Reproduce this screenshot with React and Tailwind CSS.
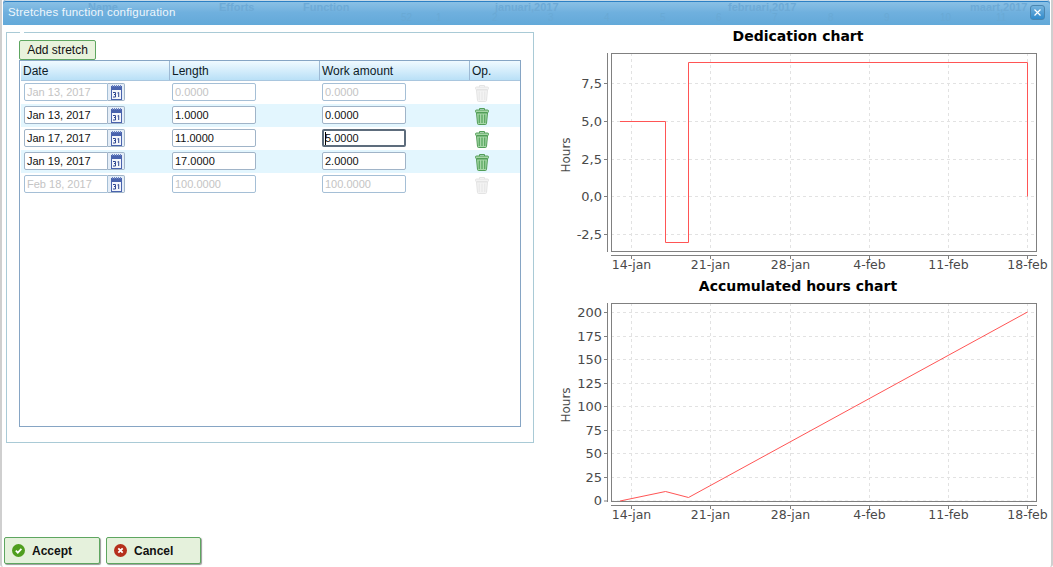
const axisText = "#4a4a4a";

function CalIcon() {
  return (
    <svg width="11" height="15" viewBox="0 0 11 15">
      <rect x="0.5" y="1.5" width="10" height="13" fill="#f4f6fb" stroke="#4a63ad" />
      <rect x="1" y="2" width="9" height="3" fill="#4a63ad" />
      <path d="M1.5 0v2M3.5 0v2M5.5 0v2M7.5 0v2M9.5 0v2" stroke="#6f86c4" />
      <path d="M2 7.5h2.5v2h-1.5h1.5v2.5h-2.5M6.5 8l1.2-.5v4.5" fill="none" stroke="#2f4690" strokeWidth="1" />
    </svg>
  );
}

function TrashIcon({ off }) {
  const s = off ? "#e4e4e4" : "#529e58";
  const f = off ? "#f3f3f3" : "#a6d6a6";
  const d = off ? "#e9e9e9" : "#5aa862";
  return (
    <svg width="14" height="17" viewBox="0 0 14 17">
      <path d="M4.5 2V0.5h5V2" fill="none" stroke={s} />
      <rect x="0.5" y="2" width="13" height="2.5" rx="1" fill={f} stroke={s} />
      <path d="M1.5 5l1 10.5c0 .6.4 1 1 1h7c.6 0 1-.4 1-1l1-10.5z" fill={f} stroke={s} />
      <path d="M4.3 6.5v8.5M7 6.5v8.5M9.7 6.5v8.5" stroke={d} strokeWidth="1.3" />
    </svg>
  );
}

function Field({ value, off, focus, right }) {
  return (
    <div
      className={`w-[84px] h-[18px] bg-white flex items-center text-[11px] leading-none overflow-hidden relative ${
        right ? "rounded-l-[2px]" : "rounded-[2px]"
      } ${focus ? "border-2 border-[#5d6c7c] pl-[1px]" : off ? "border border-[#a5bfd6] pl-[2px]" : "border border-[#a0b4c8] pl-[2px]"} ${
        off ? "text-[#c4c4c4]" : "text-[#111]"
      }`}
    >
      {focus && <span className="w-px h-[13px] bg-black absolute left-[1px] top-[1px]" />}
      {value}
    </div>
  );
}

function Row({ date, len, work, off, alt, focus }) {
  return (
    <div className={`flex h-[23px] items-start pt-[2px] ${alt ? "bg-[#e3f6fe]" : "bg-white"}`}>
      <div className="w-[149px] pl-[3px] flex">
        <Field value={date} off={off} right />
        <div className="w-[17px] h-[18px] bg-[#e4edf7] border border-l-0 border-[#a0b4c8] rounded-r-[2px] flex items-center justify-center">
          <CalIcon />
        </div>
      </div>
      <div className="w-[150px] pl-[2px]">
        <Field value={len} off={off} />
      </div>
      <div className="w-[150px] pl-[2px]">
        <Field value={work} off={off} focus={focus} />
      </div>
      <div className="w-[50px] pl-[5px] pt-[2px] flex">
        <TrashIcon off={off} />
      </div>
    </div>
  );
}

function Head({ label, w }) {
  return (
    <div className={`${w} h-full pl-[2px] flex items-center border-r border-[#9db9d4] last:border-r-0 text-[12px] text-[#0d1b26]`}>
      {label}
    </div>
  );
}

const xTicks = [
  [631.5, "14-jan"],
  [710.5, "21-jan"],
  [790.5, "28-jan"],
  [869.5, "4-feb"],
  [948.5, "11-feb"],
  [1027.5, "18-feb"],
];

function Chart({ title, top, bottom, yTicks, line, ox, oy, h }) {
  const labelY = bottom + 18;
  return (
    <svg width="503" height={h} viewBox={`${ox} ${oy} 503 ${h}`} className="block" style={{ fontFamily: "'DejaVu Sans', sans-serif" }}>
      <text x="798" y={top - 12} textAnchor="middle" fontSize="14" fontWeight="700" fill="#000">
        {title}
      </text>
      {xTicks.map(([x]) => (
        <line key={x} x1={x} x2={x} y1={top} y2={bottom} stroke="#e2e2e2" strokeDasharray="3 3" />
      ))}
      {yTicks.map(([y]) => (
        <line key={y} x1="611" x2="1036" y1={y} y2={y} stroke="#e2e2e2" strokeDasharray="3 3" />
      ))}
      <rect x="611.5" y={top + 0.5} width="425" height={bottom - top} fill="none" stroke="#808080" />
      <line x1="607.5" x2="607.5" y1={top} y2={bottom + 1} stroke="#808080" />
      <line x1="611" x2="1037" y1={bottom + 4.5} y2={bottom + 4.5} stroke="#808080" />
      {yTicks.map(([y, l]) => (
        <g key={l}>
          <line x1="604" x2="607" y1={y} y2={y} stroke="#808080" />
          <text x="602" y={y + 4} textAnchor="end" fontSize="13" fill={axisText}>
            {l}
          </text>
        </g>
      ))}
      {xTicks.map(([x, l]) => (
        <g key={l}>
          <line x1={x} x2={x} y1={bottom + 5} y2={bottom + 8} stroke="#808080" />
          <text x={x} y={labelY} textAnchor="middle" fontSize="12.5" fill={axisText}>
            {l}
          </text>
        </g>
      ))}
      <text
        x="0"
        y="0"
        transform={`translate(570 ${(top + bottom) / 2 + 3}) rotate(-90)`}
        textAnchor="middle"
        fontSize="12"
        fill={axisText}
      >
        Hours
      </text>
      <polyline points={line} fill="none" stroke="#ff5555" strokeWidth="1" />
    </svg>
  );
}

function Btn({ label, color, glyph, w }) {
  return (
    <div className={`${w} h-[27px] bg-[#e5f1dc] border border-[#5ea660] rounded-[2px] shadow-[1px_1px_1px_#999] flex items-center font-bold text-[12px] text-[#111] pl-[7px] gap-[7px]`}>
      <svg width="13" height="13" viewBox="0 0 13 13" className="shrink-0">
        <circle cx="6.5" cy="6.5" r="6.5" fill={color} />
        {glyph === "ok" ? (
          <path d="M3.8 6.7l2 2 3.6-3.8" fill="none" stroke="#fff" strokeWidth="1.7" />
        ) : (
          <path d="M4.3 4.3l4.4 4.4M8.7 4.3l-4.4 4.4" fill="none" stroke="#fff" strokeWidth="1.8" />
        )}
      </svg>
      {label}
    </div>
  );
}

const ghostTop = [
  ["Name", 88],
  ["Efforts", 219],
  ["Function", 303],
  ["januari,2017", 495],
  ["februari,2017", 728],
  ["maart,2017", 970],
];
const ghostWeeks = [
  ["52", 401],
  ["1", 436],
  ["2", 492],
  ["3", 548],
  ["4", 604],
  ["5", 660],
  ["6", 716],
  ["7", 772],
  ["8", 828],
  ["9", 884],
  ["10", 940],
  ["11", 996],
];

function TitleBar() {
  return (
    <div className="h-[25px] shrink-0 ml-px mr-px relative overflow-hidden bg-gradient-to-b from-[#8fc3e6] via-[#6fb0de] to-[#63a9d9] flex items-center pl-[5px] pr-[5px] justify-between rounded-t-[3px] shadow-[inset_0_1px_0_#c9dae6,inset_0_2px_0_#2c80c4]">
      {ghostTop.map(([t, x]) => (
        <span key={t} className="absolute top-[2px] text-[11px] font-bold text-[#6daad6] leading-none" style={{ left: x - 3 }}>
          {t}
        </span>
      ))}
      {ghostWeeks.map(([t, x]) => (
        <span key={t} className="absolute top-[13px] text-[10px] text-[#69a9d5] leading-none" style={{ left: x - 3 }}>
          {t}
        </span>
      ))}
      <span className="relative text-[11.5px] text-[#eef6fc] tracking-[0.2px]">Stretches function configuration</span>
      <span className="relative w-[15px] h-[15px] rounded-[3px] border border-[#4a86b0] bg-gradient-to-b from-[#74b3dd] to-[#2e8bcc] flex items-center justify-center">
        <svg width="7" height="7" viewBox="0 0 7 7">
          <path d="M0.5 0.5l6 6M6.5 0.5l-6 6" stroke="#fff" strokeWidth="1.2" />
        </svg>
      </span>
    </div>
  );
}

export default function App() {
  return (
    <div
      className="w-[1053px] h-[567px] bg-white overflow-hidden flex flex-col"
      style={{ fontFamily: "'Liberation Sans', Arial, sans-serif" }}
    >
      <div className="flex-1 min-h-0 flex flex-col border-l-2 border-r-2 border-[#cfcfcf] rounded-b-[3px]">
        <TitleBar />
        <div className="flex-1 min-h-0 flex">
          <div className="w-[551px] shrink-0 flex flex-col">
            <div className="relative ml-[4px] mt-[7px] w-[528px] h-[411px] border border-[#a9cad6] pl-[12px] pt-[7px]">
              <span className="absolute top-[-1px] left-[13px] w-[4px] h-px bg-white" />
              <div className="w-[77px] h-[20px] bg-[#e8f2dc] border border-[#5ea660] rounded-[2px] flex items-center justify-center text-[12px] text-[#111]">
                Add stretch
              </div>
              <div className="w-[502px] h-[367px] border border-[#86a5c4] pl-px flex flex-col">
                <div className="h-[20px] shrink-0 flex items-center bg-gradient-to-b from-[#f0faff] to-[#b9e0f7] border-b border-[#a9c6de]">
                  <Head label="Date" w="w-[149px]" />
                  <Head label="Length" w="w-[150px]" />
                  <Head label="Work amount" w="w-[150px]" />
                  <Head label="Op." w="w-[50px]" />
                </div>
                <Row date="Jan 13, 2017" len="0.0000" work="0.0000" off />
                <Row date="Jan 13, 2017" len="1.0000" work="0.0000" alt />
                <Row date="Jan 17, 2017" len="11.0000" work="5.0000" focus />
                <Row date="Jan 19, 2017" len="17.0000" work="2.0000" alt />
                <Row date="Feb 18, 2017" len="100.0000" work="100.0000" off />
              </div>
            </div>
            <div className="mt-auto mb-[3px] ml-[2px] flex gap-[6px]">
              <Btn label="Accept" color="#4f9e1e" glyph="ok" w="w-[96px]" />
              <Btn label="Cancel" color="#b5301c" glyph="x" w="w-[95px]" />
            </div>
          </div>
          <div className="flex-1 min-w-0 flex flex-col">
            <Chart
              title="Dedication chart"
              top={53}
              bottom={251}
              ox={553}
              oy={25}
              h={250}
              yTicks={[
                [83.5, "7,5"],
                [121.5, "5,0"],
                [159.5, "2,5"],
                [196.5, "0,0"],
                [234.5, "-2,5"],
              ]}
              line="620,121.5 665.5,121.5 665.5,242.5 688.5,242.5 688.5,62.5 1027.5,62.5 1027.5,196.5"
            />
            <Chart
              title="Accumulated hours chart"
              top={303}
              bottom={501}
              ox={553}
              oy={275}
              h={250}
              yTicks={[
                [312.5, "200"],
                [336.5, "175"],
                [359.5, "150"],
                [383.5, "125"],
                [406.5, "100"],
                [430.5, "75"],
                [453.5, "50"],
                [477.5, "25"],
                [501, "0"],
              ]}
              line="620,501 665.5,491.5 688.5,497.5 1027.5,312"
            />
          </div>
        </div>
      </div>
    </div>
  );
}
